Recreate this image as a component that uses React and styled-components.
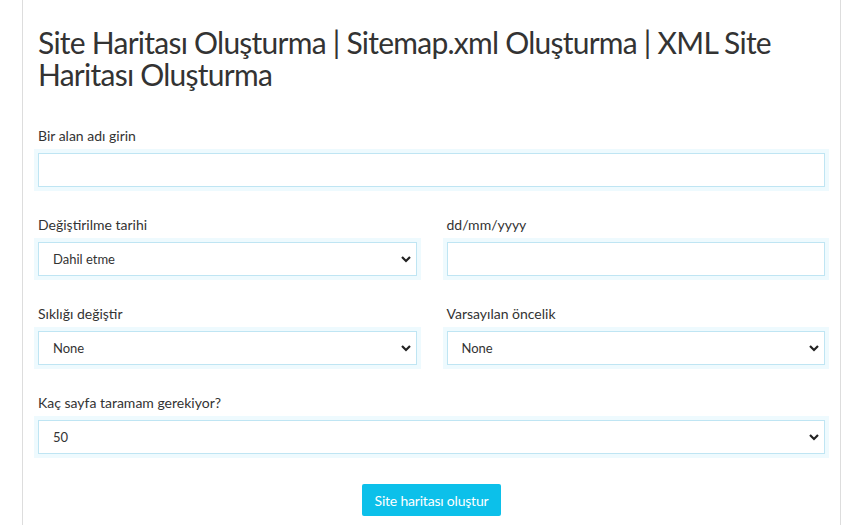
import React from 'react';
import styled, { createGlobalStyle } from 'styled-components';

const GlobalStyle = createGlobalStyle`
  body {
    margin: 0;
    background: #ffffff;
    font-family: "Source Sans Pro", Lato, "Liberation Sans", sans-serif;
    color: #333333;
  }
`;

const Page = styled.div`
  margin-left: 22px;
  width: 787px;
  min-height: 525px;
  padding: 26px 15px 0 15px;
  border-left: 1px solid #dddddd;
  border-right: 1px solid #dddddd;
`;

const Title = styled.h1`
  margin: 0 0 36px 0;
  font-size: 30px;
  font-weight: 400;
  line-height: 32px;
  letter-spacing: -0.75px;
  color: #333333;
`;

const Grid = styled.div`
  display: grid;
  grid-template-columns: 1fr 1fr;
  column-gap: 30px;
  row-gap: 28px;
`;

const Field = styled.div`
  grid-column: ${(p) => (p.wide ? '1 / 3' : 'auto')};
  display: flex;
  flex-direction: column;
`;

const Label = styled.label`
  font-size: 14px;
  line-height: 20px;
  margin-bottom: 7px;
  color: #333333;
`;

const boxStyles = `
  box-sizing: border-box;
  width: 100%;
  height: 34px;
  border: 1px solid #bfe5f3;
  box-shadow: 0 0 0 4px #eefafe;
  background: #ffffff;
  font-family: "Source Sans Pro", Lato, "Liberation Sans", sans-serif;
  font-size: 13px;
  color: #333333;
  outline: none;
`;

const Input = styled.input`
  ${boxStyles}
  padding: 0 12px;
`;

const SelectWrap = styled.div`
  position: relative;
`;

const Select = styled.select`
  ${boxStyles}
  appearance: none;
  padding: 0 30px 0 14px;
`;

const Chevron = styled.svg`
  position: absolute;
  right: 6px;
  top: 13px;
  width: 10px;
  height: 8px;
  pointer-events: none;
`;

const Actions = styled.div`
  display: flex;
  justify-content: center;
  padding-top: 30px;
`;

const Button = styled.button`
  height: 32px;
  padding: 0 13px;
  border: none;
  border-radius: 2px;
  background: #0cc0ea;
  color: #ffffff;
  font-family: "Source Sans Pro", Lato, "Liberation Sans", sans-serif;
  font-size: 14px;
  letter-spacing: -0.2px;
  cursor: pointer;
`;

function Dropdown({ value, options }) {
  return (
    <SelectWrap>
      <Select defaultValue={value}>
        {options.map((o) => (
          <option key={o}>{o}</option>
        ))}
      </Select>
      <Chevron viewBox="0 0 10 8">
        <path d="M1 2 L5 6 L9 2" stroke="#222" strokeWidth="2.2" fill="none" />
      </Chevron>
    </SelectWrap>
  );
}

export default function App() {
  return (
    <>
      <GlobalStyle />
      <Page>
        <Title>
          Site Haritası Oluşturma | Sitemap.xml Oluşturma | XML Site Haritası Oluşturma
        </Title>
        <Grid>
          <Field wide>
            <Label>Bir alan adı girin</Label>
            <Input type="text" />
          </Field>
          <Field>
            <Label>Değiştirilme tarihi</Label>
            <Dropdown value="Dahil etme" options={['Dahil etme', 'Şimdi']} />
          </Field>
          <Field>
            <Label>dd/mm/yyyy</Label>
            <Input type="text" />
          </Field>
          <Field>
            <Label>Sıklığı değiştir</Label>
            <Dropdown value="None" options={['None', 'Always', 'Hourly', 'Daily']} />
          </Field>
          <Field>
            <Label>Varsayılan öncelik</Label>
            <Dropdown value="None" options={['None', '0.1', '0.5', '1.0']} />
          </Field>
          <Field wide>
            <Label>Kaç sayfa taramam gerekiyor?</Label>
            <Dropdown value="50" options={['50', '100', '500']} />
          </Field>
        </Grid>
        <Actions>
          <Button type="button">Site haritası oluştur</Button>
        </Actions>
      </Page>
    </>
  );
}
